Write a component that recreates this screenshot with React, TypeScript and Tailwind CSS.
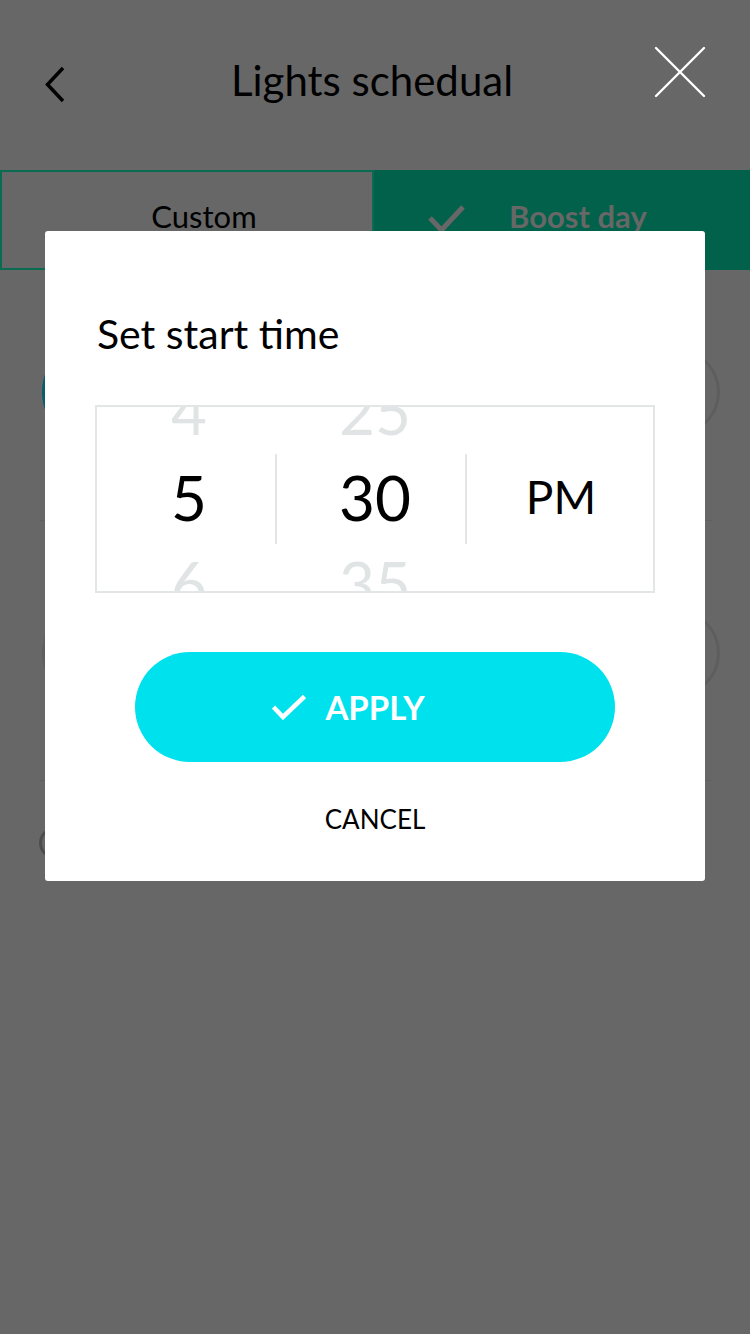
import React from 'react'

const HOURS = ['4', '5', '6']
const MINUTES = ['25', '30', '35']

function WheelColumn({ items, width, size }: { items: string[]; width: string; size: string }) {
  return (
    <div className={`flex flex-col items-center justify-center overflow-hidden h-full ${width}`}>
      {items.map((v, i) => (
        <div
          key={v + i}
          className={`h-[86px] shrink-0 flex items-center justify-center leading-none pb-[4px] ${size} ${
            i === 1 ? 'text-black' : 'text-[#e1e4e4]'
          }`}
        >
          {v}
        </div>
      ))}
    </div>
  )
}

function Divider() {
  return <div className="w-[2px] h-[90px] self-center bg-[#e3e6e6] shrink-0" />
}

export default function App() {
  return (
    <div className="relative w-[750px] h-[1334px] overflow-hidden bg-[#676767] font-['Lato','Noto_Sans',sans-serif]">
      {/* header */}
      <div className="grid grid-cols-[1fr_auto_1fr] h-[170px]">
        <div>
          <svg className="ml-[45px] mt-[66px]" width="20" height="37" viewBox="0 0 20 37" fill="none">
            <path d="M18 2 L2.5 18.5 L18 35" stroke="#000" strokeWidth="3.5" />
          </svg>
        </div>
        <h1 className="mt-[59px] mr-[6px] text-[42px] leading-none text-black">Lights schedual</h1>
        <div className="flex justify-end">
          <svg className="mr-[44px] mt-[46px]" width="52" height="52" viewBox="0 0 52 52" fill="none">
            <path d="M2 2 L50 50 M50 2 L2 50" stroke="#fff" strokeWidth="2.4" strokeLinecap="round" />
          </svg>
        </div>
      </div>

      {/* tabs */}
      <div className="flex h-[100px]">
        <div className="w-[374px] border-2 border-[#0b6b51] flex items-center justify-center pl-[34px] pb-[8px]">
          <span className="text-[31px] leading-none text-black">Custom</span>
        </div>
        <div className="flex-1 bg-[#02614a] flex items-center pl-[53px] pb-[8px]">
          <svg width="40" height="32" viewBox="0 0 40 32" fill="none" className="mt-[6px]">
            <path d="M3 15 L14.5 27 L36 4" stroke="#676767" strokeWidth="5" />
          </svg>
          <span className="ml-[42px] text-[31px] leading-none font-bold text-[#676767]">Boost day</span>
        </div>
      </div>

      {/* dimmed content under the dialog */}
      <div className="flex flex-col">
        <div className="h-[250px] flex items-center justify-between pl-[42px] pr-[30px] pb-[6px]">
          <div className="w-[110px] h-[110px] rounded-full bg-[#0a5c6b]" />
          <div className="w-[88px] h-[88px] rounded-full border-[3px] border-[#5e5e5e]" />
        </div>
        <div className="ml-[40px] w-[672px] h-[1px] bg-[#5f5f5f]" />
        <div className="h-[259px] flex items-center justify-between pl-[42px] pr-[30px] pt-[4px]">
          <div className="w-[110px] h-[110px] rounded-full bg-[#5f5f5f]" />
          <div className="w-[88px] h-[88px] rounded-full border-[3px] border-[#5e5e5e]" />
        </div>
        <div className="ml-[40px] w-[672px] h-[1px] bg-[#5f5f5f]" />
        <div className="pt-[46px] pl-[39px]">
          <div className="w-[32px] h-[32px] rounded-full border-[3px] border-[#4d4d4d]" />
        </div>
      </div>

      {/* dialog */}
      <div className="absolute left-[45px] top-[231px] w-[660px] h-[650px] bg-white rounded-[3px] flex flex-col">
        <h2 className="mt-[82px] ml-[52px] text-[41px] leading-none text-black">Set start time</h2>

        <div className="mt-[51px] mx-[50px] h-[188px] border-2 border-[#e3e6e6] flex">
          <WheelColumn items={HOURS} width="w-[178px] pl-[6px]" size="text-[62px]" />
          <Divider />
          <WheelColumn items={MINUTES} width="w-[188px] pl-[8px]" size="text-[62px]" />
          <Divider />
          <div className="flex-1 flex items-center justify-center pb-[4px] pl-[2px]">
            <span className="text-[46px] leading-none text-black">PM</span>
          </div>
        </div>

        <button className="mt-[59px] mx-[90px] h-[110px] rounded-full bg-[#00e1ee] flex items-center justify-center gap-[19px]">
          <svg width="34" height="26" viewBox="0 0 34 26" fill="none">
            <path d="M1.5 13 L11 23 L32.5 2.5" stroke="#fff" strokeWidth="4.5" />
          </svg>
          <span className="text-[33px] leading-none font-bold text-white">APPLY</span>
          <span className="w-[34px]" />
        </button>

        <button className="mt-[44px] self-center text-[26px] leading-none text-black">CANCEL</button>
      </div>
    </div>
  )
}
